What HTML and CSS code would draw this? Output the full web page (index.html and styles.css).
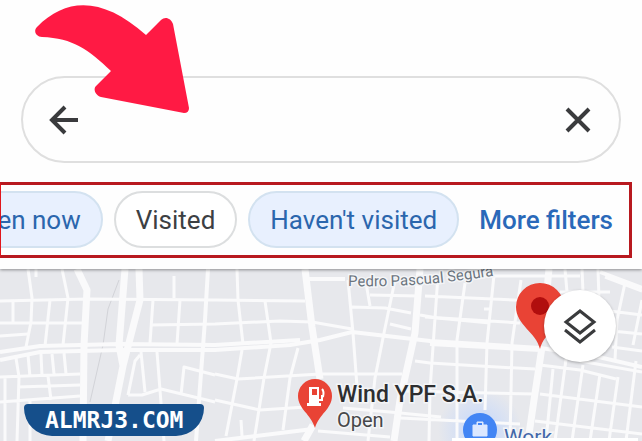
FILE: index.html
```html
<!DOCTYPE html>
<html lang="en">
  <head>
    <meta charset="UTF-8" />
    <title>Map filters</title>
    <meta name="viewport" content="width=device-width, initial-scale=1.0" />
    <link rel="stylesheet" href="styles.css">
  </head>
  <body>
    <header class="top">
      <form class="search">
        <button type="button" class="icon-btn" aria-label="Back">
          <svg width="32" height="32" viewBox="0 0 32 32"><path d="M31 16H5M18 3L5 16l13 13" /></svg>
        </button>
        <input type="text" class="search-input" aria-label="Search" />
        <button type="reset" class="icon-btn" aria-label="Clear">
          <svg width="32" height="32" viewBox="0 0 32 32"><path d="M4 5l22 22M26 5L4 27" /></svg>
        </button>
      </form>

      <div class="filters">
        <button type="button" class="chip selected">Open now</button>
        <button type="button" class="chip">Visited</button>
        <button type="button" class="chip selected">Haven't visited</button>
        <a href="#" class="more">More filters</a>
      </div>
    </header>

    <main class="map">
      <svg class="map-canvas" viewBox="0 269 642 172" preserveAspectRatio="xMinYMin slice">
        <defs>
          <path id="segura" d="M348 286C395 287 435 285 498 275" />
          <radialGradient id="glow">
            <stop offset="0.3" stop-color="#cddcf8" />
            <stop offset="1" stop-color="#cddcf8" stop-opacity="0" />
          </radialGradient>
        </defs>

        <circle cx="480" cy="430" r="42" fill="url(#glow)" />
        <path class="rail" d="M119 280L108 309L103 345L90 402" />

        <!-- side streets -->
        <g class="street">
          <path d="M0 301L88 299L215 300L305 301M0 323H84M0 336L28 334M150 325L215 324L280 321L312 322L352 329" />
          <path d="M28 269L32 298L31 322L26 347M36 269V277M62 269L68 298L63 345M13 300V322M50 300L45 346M174 276V298M153 300L150 343M180 300L177 344" />
          <path d="M0 377L80 374M18 387L80 385M0 402L80 396M5 377V441M16 358L19 377L17 441M28 355L30 377M41 354L42 376M52 354L54 374M64 353L66 374M48 376L51 400M30 400V441" />
          <path d="M128 395H142L161 389L215 402M141 352L145 392M157 352L164 441M128 395L135 361L140 355M181 395L184 367L215 375" />
          <path d="M237 269L238 300L243 344M265 301L271 343L264 378L254 441M215 374L238 379L320 374M215 400L260 410L306 407M242 350L237 379L226 436M298 348L290 378L283 430M241 420L242 436" />
          <path d="M348 280L353 333L358 400M366 283L370 306M352 307L385 308L411 313M395 280L384 333L375 378L368 441M370 295L419 296M390 324L411 329" />
          <path d="M320 374H402M343 408L390 412L441 417M318 431L390 437M420 315L437 318L490 323M415 361L430 363L480 366L535 369" />
          <path d="M438 275L430 390L429 441M465 283L457 340V441M494 275L487 343L485 410M521 280L512 343L510 441M425 296L535 301M425 317L520 323M484 309H490M405 391L535 394M400 418L520 424" />
          <path d="M553 369L546 441M567 352L555 441M583 365L572 441M600 374L590 441M618 377L609 441M636 361L626 441M540 365L580 370L616 379M580 361L642 372M540 394L642 407M535 421L642 434" />
          <path d="M565 269L567 292M582 269L583 292M598 269L599 300M605 277L642 291M625 283L617 320L615 360M610 311L642 315M612 331L642 334M612 347L642 351M480 276H580M560 292H610M642 300L633 345" />
        </g>

        <!-- avenues -->
        <g class="avenue">
          <path d="M0 352L40 346L120 344L215 345L300 340" />
          <path d="M0 360L40 352L120 350L215 350L290 345L320 340L352 332L430 341L540 348L590 355L642 367" />
          <path d="M430 344L540 350M308 279H345M600 272L642 288" />
          <path d="M208 269L205 320L199 400L196 441M215 441L313 429" />
        </g>
        <g class="main-road">
          <path d="M77 269L87 290L84 345L83 441M125 269L119 345L123 366M139 269L140 300L123 366L108 441" />
          <path d="M305 269L312 327L320 379M313 425L304 441M420 269L415 333L400 400L394 441M542 347L534 400L528 441M549 269L547 290" />
        </g>

        <text class="road-label"><textPath href="#segura">Pedro Pascual Segura</textPath></text>

        <!-- fuel station -->
        <path class="pin" d="M315 428C311 414 298 409 298 396A17 17 0 0 1 332 396C332 409 319 414 315 428Z" />
        <path fill="#fff" fill-rule="evenodd" d="M309 387h10v16h2v3h-14v-3h2zM312 389v6h5v-6z" />
        <path d="M319 400h3v-5M322 389c2 2 2 4 1 8" fill="none" stroke="#fff" stroke-width="2" />
        <text class="place-name" x="337" y="402">Wind YPF S.A.</text>
        <text class="place-status" x="337" y="427">Open</text>

        <!-- selected place -->
        <path class="pin" d="M540 349C536 332 516 325 516 307A24 24 0 0 1 564 307C564 325 544 332 540 349Z" />
        <circle cx="540" cy="306" r="9" fill="#b10e0e" />

        <!-- work -->
        <circle cx="480" cy="430" r="17" fill="#4285f4" />
        <path d="M473 425h14v11h-14zM477 425v-3h6v3" fill="#dce8ff" stroke="#dce8ff" stroke-width="1" />
        <path d="M478 423h4v2h-4z" fill="#4285f4" />
        <text class="work-label" x="504" y="444">Work</text>
      </svg>

      <button type="button" class="layers" aria-label="Map layers">
        <svg width="36" height="36" viewBox="0 0 36 36"><path d="M18 3L32 14L18 25L4 14ZM3 22L18 34L33 22" /></svg>
      </button>
      <div class="badge">ALMRJ3.COM</div>
      <div class="sheet"></div>
    </main>

    <svg class="pointer" width="156" height="112" viewBox="34 3 156 112">
      <path d="M37 27C68 -4 104 -2 146 35L161 20C165 16 171 18 173 24L189 108Q189 113 184 113L101 97C95 95 93 89 96 86L111 71C89 50 73 38 42 37C36 37 33 31 37 27Z" />
    </svg>
  </body>
</html>
```
FILE: styles.css
```css
* {
  box-sizing: border-box;
}
body {
  margin: 0;
  min-height: 100vh;
  display: flex;
  flex-direction: column;
  position: relative;
  overflow: hidden;
  font-family: Roboto, sans-serif;
  background-color: #fefefe;
  color: #3c4043;
}
svg {
  display: block;
}
button {
  font-family: inherit;
  cursor: pointer;
}
.top {
  padding: 76px 0 11px;
  position: relative;
  z-index: 1;
  background-color: #fefefe;
  box-shadow: 0 1px 3px rgba(0, 0, 0, 0.4);
}
.search {
  display: flex;
  align-items: center;
  height: 87px;
  margin: 0 21px;
  padding: 0 24px;
  border: 2px solid #dfdfdf;
  border-radius: 44px;
}
.search-input {
  flex: 1;
  min-width: 0;
  border: none;
  outline: none;
  background: none;
  font-size: 26px;
}
.icon-btn {
  padding: 0;
  border: none;
  background: none;
}
.icon-btn path,
.layers path {
  fill: none;
  stroke: #3a3b3d;
  stroke-width: 4;
}
.layers path {
  stroke-width: 3;
}

/* filter row, scrolled so the first chip is cut off */
.filters {
  display: flex;
  align-items: center;
  justify-content: flex-end;
  gap: 11px;
  margin: 19px 10px 0 0;
  padding: 6px 16px 7px 0;
  border: 3px solid #b8191f;
  border-left: 1px solid #e0161c;
  overflow: hidden;
}
.chip {
  flex: none;
  height: 57px;
  padding: 0 20px;
  border: 2px solid #dcdedf;
  border-radius: 29px;
  background-color: #fff;
  color: #3c4043;
  font-size: 26px;
}
.chip.selected {
  border-color: #d3e2f0;
  background-color: #e8f0fe;
  color: #2b66ad;
}
.more {
  flex: none;
  margin-left: 9px;
  color: #2a69b9;
  font-size: 26px;
  font-weight: 500;
  text-decoration: none;
}

.map {
  flex: 1;
  position: relative;
  min-height: 172px;
  background-color: #e7e8ec;
}
.map-canvas {
  position: absolute;
  width: 100%;
  height: 100%;
}
.street,
.avenue,
.main-road {
  fill: none;
  stroke: #fafafb;
  stroke-width: 3;
  stroke-linejoin: round;
}
.avenue {
  stroke-width: 4;
}
.main-road {
  stroke-width: 7;
}
.rail {
  fill: none;
  stroke: #d2d3d8;
}
.pin {
  fill: #e94335;
}
.map-canvas text {
  paint-order: stroke;
  stroke: #f4f5f7;
  stroke-width: 3px;
}
.road-label {
  fill: #6b747e;
  font-size: 15px;
}
.place-name {
  fill: #2d2e30;
  font-size: 23px;
  font-weight: 500;
}
.place-status {
  fill: #47484a;
  font-size: 20px;
}
.work-label {
  fill: #4267a9;
  font-size: 21px;
}
.layers {
  position: absolute;
  top: 21px;
  right: 26px;
  display: flex;
  align-items: center;
  justify-content: center;
  width: 72px;
  height: 72px;
  padding: 0;
  border: none;
  border-radius: 50%;
  background-color: #fff;
  box-shadow: 0 1px 3px rgba(0, 0, 0, 0.3);
}
.badge {
  position: absolute;
  left: 24px;
  bottom: 5px;
  padding: 0 21px;
  border-radius: 4px 4px 28px 28px;
  background-color: #154f8b;
  color: #fff;
  font-family: "DejaVu Sans Mono", monospace;
  font-size: 23px;
  font-weight: bold;
  line-height: 32px;
}
.sheet {
  position: absolute;
  right: 4px;
  bottom: 0;
  width: 186px;
  height: 3px;
  background-color: #fff;
}
.pointer {
  position: absolute;
  top: 3px;
  left: 34px;
  z-index: 2;
  fill: #ff1a44;
  pointer-events: none;
}
```
